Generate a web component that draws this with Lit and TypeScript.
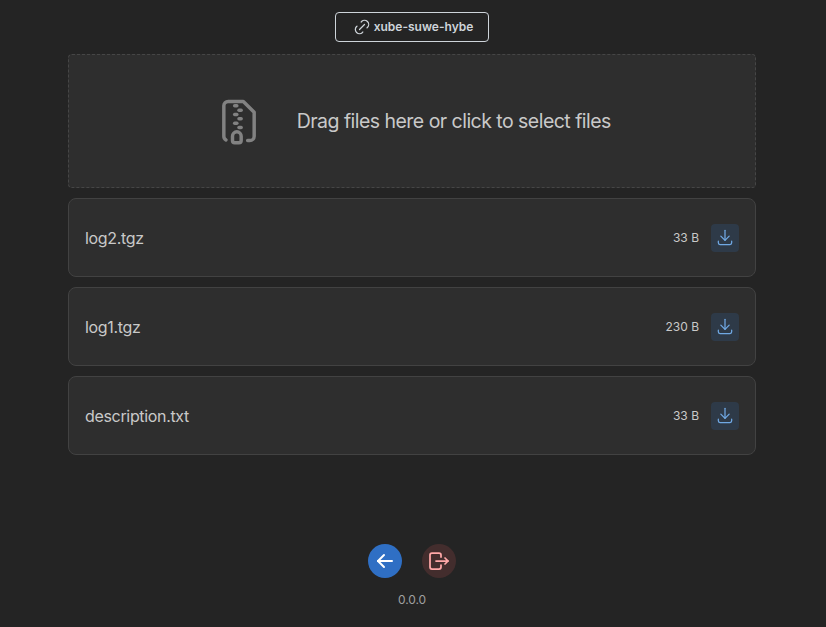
import { LitElement, html, css, svg } from "lit";
import { customElement } from "lit/decorators.js";

const icon = (size: number, stroke: number, paths: string[]) => html`<svg
  width=${size} height=${size} viewBox="0 0 24 24" fill="none" stroke="currentColor"
  stroke-width=${stroke} stroke-linecap="round" stroke-linejoin="round">${paths.map((d) => svg`<path d=${d}></path>`)}</svg>`;

const LINK = [
  "M9 15l6 -6",
  "M11 6l.463 -.536a5 5 0 0 1 7.071 7.072l-.534 .464",
  "M13 18l-.397 .534a5.068 5.068 0 0 1 -7.127 0a4.972 4.972 0 0 1 0 -7.071l.524 -.463",
];
const ZIP = [
  "M6 20.735a2 2 0 0 1 -1 -1.735v-14a2 2 0 0 1 2 -2h7l5 5v11a2 2 0 0 1 -2 2h-1",
  "M11 17a2 2 0 0 1 2 2v2a1 1 0 0 1 -1 1h-2a1 1 0 0 1 -1 -1v-2a2 2 0 0 1 2 -2z",
  "M11 5l-1 0", "M13 7l-1 0", "M11 9l-1 0", "M13 11l-1 0", "M11 13l-1 0", "M13 15l-1 0",
];
const DOWNLOAD = ["M4 17v2a2 2 0 0 0 2 2h12a2 2 0 0 0 2 -2v-2", "M7 11l5 5l5 -5", "M12 4l0 12"];
const BACK = ["M5 12l14 0", "M5 12l6 6", "M5 12l6 -6"];
const LOGOUT = [
  "M14 8v-2a2 2 0 0 0 -2 -2h-7a2 2 0 0 0 -2 2v12a2 2 0 0 0 2 2h7a2 2 0 0 0 2 -2v-2",
  "M9 12h12l-3 -3",
  "M18 15l3 -3",
];

const files = [
  { name: "log2.tgz", size: "33 B" },
  { name: "log1.tgz", size: "230 B" },
  { name: "description.txt", size: "33 B" },
];

@customElement("app-root")
export class AppRoot extends LitElement {
  static styles = css`
    :host {
      display: flex;
      flex-direction: column;
      align-items: center;
      box-sizing: border-box;
      height: 627px;
      padding: 12px 70px 0 68px;
      background: #242424;
      color: #c9c9c9;
      font-family: Inter, "Liberation Sans", sans-serif;
    }
    * { box-sizing: border-box; }
    svg { display: block; flex: none; }
    button {
      display: flex;
      align-items: center;
      justify-content: center;
      padding: 0;
      border: 0;
      font: inherit;
      flex: none;
    }
    .token {
      width: 154px;
      height: 30px;
      gap: 2px;
      padding: 0 0 1px 1px;
      border: 1px solid #ced4da;
      border-radius: 4px;
      background: transparent;
      color: #ced4da;
      font-size: 12px;
      font-weight: 600;
      white-space: nowrap;
    }
    .drop {
      display: flex;
      align-items: center;
      justify-content: center;
      gap: 31.5px;
      width: 100%;
      height: 134px;
      margin-top: 12px;
      border: 1px dashed #464646;
      border-radius: 4px;
      background: #2e2e2e;
      font-size: 19.5px;
      white-space: nowrap;
    }
    .drop svg { color: #828282; }
    .prompt { width: 314px; letter-spacing: -0.53px; }
    .files {
      display: flex;
      flex-direction: column;
      gap: 10px;
      width: 100%;
      margin-top: 10px;
    }
    .file {
      display: flex;
      align-items: center;
      height: 79px;
      padding: 0 16px;
      border: 1px solid #424242;
      border-radius: 8px;
      background: #2e2e2e;
    }
    .name { flex: 1; font-size: 16px; letter-spacing: -0.33px; }
    .size { margin-right: 12px; font-size: 12px; }
    .download {
      width: 28px;
      height: 28px;
      padding-bottom: 2px;
      border-radius: 4px;
      background: #2e3a48;
      color: #70a9e4;
    }
    .actions { display: flex; gap: 20px; margin-top: 89px; }
    .round { width: 34px; height: 34px; border-radius: 50%; }
    .back { background: #2f6fc4; color: #fff; }
    .logout { background: #432d2d; color: #ffa8a8; }
    .version { margin-top: 14px; font-size: 12px; line-height: 16px; letter-spacing: -0.1px; color: #a0a0a0; }
  `;

  render() {
    return html`
      <button class="token">${icon(20, 1.5, LINK)}<span>xube-suwe-hybe</span></button>
      <div class="drop">${icon(52, 1.6, ZIP)}<span class="prompt">Drag files here or click to select files</span></div>
      <div class="files">
        ${files.map((f) => html`<div class="file">
          <span class="name">${f.name}</span>
          <span class="size">${f.size}</span>
          <button class="download" aria-label="Download">${icon(20, 1.5, DOWNLOAD)}</button>
        </div>`)}
      </div>
      <div class="actions">
        <button class="round back" aria-label="Back">${icon(24, 2, BACK)}</button>
        <button class="round logout" aria-label="Leave">${icon(24, 1.75, LOGOUT)}</button>
      </div>
      <div class="version">0.0.0</div>
    `;
  }
}
